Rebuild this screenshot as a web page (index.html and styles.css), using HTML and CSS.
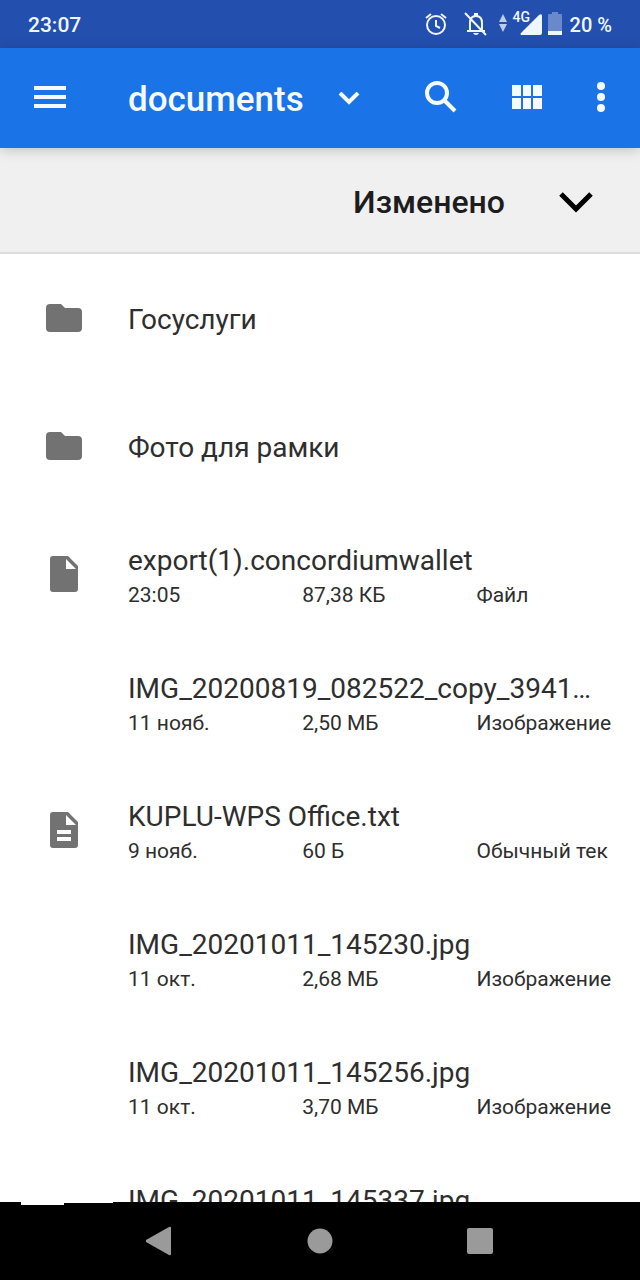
FILE: index.html
```
<!DOCTYPE html>
<html lang="ru">
<head>
<meta charset="utf-8">
<meta name="viewport" content="width=device-width, initial-scale=1">
<title>documents</title>
<link rel="stylesheet" href="styles.css">
</head>
<body>
<svg class="defs" aria-hidden="true">
  <symbol id="folder" viewBox="0 0 36 30"><path d="M4 1h11l4 4h13a4 4 0 0 1 4 4v16a4 4 0 0 1-4 4H4a4 4 0 0 1-4-4V5a4 4 0 0 1 4-4z"/></symbol>
  <symbol id="file" viewBox="0 0 28 36"><path fill-rule="evenodd" d="M3 0h15l10 10v23a3 3 0 0 1-3 3H3a3 3 0 0 1-3-3V3a3 3 0 0 1 3-3zM16 3v10h10z"/></symbol>
  <symbol id="text-file" viewBox="0 0 28 36"><path fill-rule="evenodd" d="M3 0h15l10 10v23a3 3 0 0 1-3 3H3a3 3 0 0 1-3-3V3a3 3 0 0 1 3-3zM16 3v10h10zM7 18v4h14v-4zM7 25v4h14v-4z"/></symbol>
</svg>

<div class="status-bar">
  <time class="clock">23:07</time>
  <div class="status-icons">
    <svg width="22" height="24" viewBox="0 0 22 24" fill="none" stroke="currentColor" stroke-width="2"><circle cx="11" cy="13" r="9"/><path d="M11 8v6l4 2M1 6l5-4M21 6l-5-4"/></svg>
    <svg class="muted-bell" width="24" height="24" viewBox="0 0 24 24"><path fill="none" stroke="currentColor" stroke-width="2" d="M6 18V11q0-7 6-7t6 7v8M3 19h18M1 1l21 22"/><path fill="currentColor" d="M10 1h4v4h-4zM9 21h6q-1 2-3 2t-3-2z"/></svg>
    <svg class="traffic" width="8" height="20" viewBox="0 0 8 20" fill="currentColor"><path d="M0 9l4-8 4 8zM0 11l4 8 4-8z"/></svg>
    <div class="signal">
      <svg width="22" height="21" viewBox="0 0 22 21" fill="currentColor"><path d="M22 2v17q0 2-2 2H1q-1-1 0-2L19 1q3-2 3 1z"/></svg>
      <span class="network">4G</span>
    </div>
    <svg class="battery" width="14" height="24" viewBox="0 0 14 24" fill="currentColor"><path opacity=".35" d="M4 0h6v2h3q1 0 1 1v16H0V3q0-1 1-1h3z"/><path d="M0 19h14v4H0z"/></svg>
    <span class="level">20 %</span>
  </div>
</div>

<header class="app-bar">
  <button class="icon-button" aria-label="Меню"><svg width="32" height="22" viewBox="0 0 32 22" fill="currentColor"><path d="M0 0h32v4H0zM0 9h32v4H0zM0 18h32v4H0z"/></svg></button>
  <button class="location">
    <span>documents</span>
    <svg width="22" height="14" viewBox="0 0 22 14" fill="none" stroke="currentColor" stroke-width="4"><path d="M2 1l9 9 9-9"/></svg>
  </button>
  <div class="actions">
    <button class="icon-button" aria-label="Поиск"><svg width="32" height="32" viewBox="0 0 32 32" fill="none" stroke="currentColor"><circle cx="12" cy="12" r="10" stroke-width="4"/><path stroke-width="4" d="M19 19l11 11"/></svg></button>
    <button class="icon-button" aria-label="Сетка"><svg width="30" height="24" viewBox="0 0 30 24" fill="currentColor"><path d="M0 0h9v11H0zM11 0h8v11h-8zM21 0h9v11h-9zM0 13h9v11H0zM11 13h8v11h-8zM21 13h9v11h-9z"/></svg></button>
    <button class="icon-button" aria-label="Ещё"><svg width="8" height="30" viewBox="0 0 8 30" fill="currentColor"><circle cx="4" cy="4" r="4"/><circle cx="4" cy="15" r="4"/><circle cx="4" cy="26" r="4"/></svg></button>
  </div>
</header>

<div class="sort-bar">
  <button class="sort-button">
    <span>Изменено</span>
    <svg width="34" height="22" viewBox="0 0 34 22" fill="none" stroke="currentColor" stroke-width="5"><path d="M2 3l15 15L32 3"/></svg>
  </button>
</div>

<main class="files">
  <ul class="file-list">
    <li class="row"><div class="thumb"><svg width="36" height="30"><use href="#folder"/></svg></div><div class="info"><p class="name">Госуслуги</p></div></li>
    <li class="row"><div class="thumb"><svg width="36" height="30"><use href="#folder"/></svg></div><div class="info"><p class="name">Фото для рамки</p></div></li>
    <li class="row"><div class="thumb"><svg width="28" height="36"><use href="#file"/></svg></div><div class="info detailed"><p class="name">export(1).concordiumwallet</p><div class="meta"><span>23:05</span><span>87,38 КБ</span><span>Файл</span></div></div></li>
    <li class="row"><div class="thumb"></div><div class="info detailed"><p class="name">IMG_20200819_082522_copy_3941…</p><div class="meta"><span>11 нояб.</span><span>2,50 МБ</span><span>Изображение</span></div></div></li>
    <li class="row"><div class="thumb"><svg width="28" height="36"><use href="#text-file"/></svg></div><div class="info detailed"><p class="name">KUPLU-WPS Office.txt</p><div class="meta"><span>9 нояб.</span><span>60 Б</span><span>Обычный тек</span></div></div></li>
    <li class="row"><div class="thumb"></div><div class="info detailed"><p class="name">IMG_20201011_145230.jpg</p><div class="meta"><span>11 окт.</span><span>2,68 МБ</span><span>Изображение</span></div></div></li>
    <li class="row"><div class="thumb"></div><div class="info detailed"><p class="name">IMG_20201011_145256.jpg</p><div class="meta"><span>11 окт.</span><span>3,70 МБ</span><span>Изображение</span></div></div></li>
    <li class="row"><div class="thumb"></div><div class="info detailed"><p class="name">IMG_20201011_145337.jpg</p><div class="meta"></div></div></li>
  </ul>
</main>

<nav class="system-nav">
  <button class="icon-button" aria-label="Назад"><svg width="28" height="30" viewBox="0 0 28 30" fill="currentColor"><path d="M0 14L23 1q2-1 2 1v26q0 2-2 1L0 16q-1-1 0-2z"/></svg></button>
  <button class="icon-button" aria-label="Домой"><svg width="26" height="26" viewBox="0 0 26 26" fill="currentColor"><circle cx="13" cy="13" r="12.5"/></svg></button>
  <button class="icon-button" aria-label="Недавние"><svg width="28" height="28" viewBox="0 0 28 28" fill="currentColor"><rect x="1" y="1" width="26" height="26" rx="2"/></svg></button>
</nav>
</body>
</html>
```
FILE: styles.css
```
* {
  box-sizing: border-box;
}

body {
  margin: 0;
  height: 100vh;
  display: flex;
  flex-direction: column;
  overflow: hidden;
  background: #fff;
  color: #2e2e2e;
  font-family: Roboto, "Noto Sans", sans-serif;
}

button {
  padding: 0;
  border: 0;
  background: none;
  color: inherit;
  font: inherit;
}

svg {
  display: block;
  flex: none;
}

.defs {
  position: absolute;
  width: 0;
  height: 0;
}

.icon-button {
  display: flex;
  align-items: center;
  justify-content: center;
}

/* Status bar */
.status-bar {
  flex: none;
  height: 48px;
  padding: 2px 28px 0;
  display: flex;
  align-items: center;
  justify-content: space-between;
  background: #234fae;
  color: #f0f6ff;
  font-size: 21px;
  font-weight: 500;
}

.status-icons {
  display: flex;
  align-items: center;
}

.status-icons svg {
  margin-bottom: 2px;
}

.status-icons .muted-bell {
  margin-left: 17px;
}

.status-icons .traffic {
  margin: 0 6px 4px 11px;
  opacity: 0.75;
}

.signal {
  position: relative;
  padding-left: 7px;
}

.network {
  position: absolute;
  left: 0;
  top: -4px;
  font-size: 14px;
  line-height: 14px;
}

.status-icons .battery {
  margin: 0 8px 2px 6px;
}

.level {
  font-size: 20px;
}

/* App bar */
.app-bar {
  position: relative;
  z-index: 1;
  flex: none;
  height: 100px;
  padding: 0 35px 2px 34px;
  display: flex;
  align-items: center;
  background: #1b73e8;
  color: #f4faff;
  box-shadow: 0 2px 12px rgba(0, 0, 0, 0.2);
}

.location {
  margin-left: 62px;
  padding-top: 4px;
  display: flex;
  align-items: center;
  gap: 34px;
  font-size: 35px;
  font-weight: 500;
}

.actions {
  margin-left: auto;
  display: flex;
  align-items: center;
  gap: 55px;
}

/* Sort bar */
.sort-bar {
  flex: none;
  height: 106px;
  padding: 4px 47px 0 0;
  display: flex;
  align-items: center;
  justify-content: flex-end;
  background: #f0f0f0;
  border-bottom: 2px solid #dcdcdc;
  color: #1d1d1d;
}

.sort-button {
  display: flex;
  align-items: center;
  gap: 54px;
  font-size: 32px;
  font-weight: 500;
}

.sort-button svg {
  color: #000;
}

/* File list */
.files {
  flex: 1;
  min-height: 0;
  overflow: hidden;
}

.file-list {
  margin: 0;
  padding: 0;
  list-style: none;
}

.row {
  height: 128px;
  padding-right: 28px;
  display: grid;
  grid-template-columns: 128px minmax(0, 1fr);
  align-items: center;
}

.thumb {
  width: 128px;
  display: flex;
  justify-content: center;
  fill: #727272;
}

.info {
  padding-top: 4px;
}

.info.detailed {
  padding-top: 6px;
}

.name {
  margin: 0;
  font-size: 28px;
  line-height: 36px;
  white-space: nowrap;
  overflow: hidden;
}

.meta {
  display: grid;
  grid-template-columns: 36% 36% 28%;
  font-size: 21px;
  line-height: 32px;
  min-height: 32px;
}

.meta span {
  white-space: nowrap;
  overflow: hidden;
}

/* System navigation */
.system-nav {
  position: relative;
  flex: none;
  height: 78px;
  padding: 0 80px;
  display: grid;
  grid-template-columns: repeat(3, 1fr);
  background: #000;
  color: #9a9a9a;
}

.system-nav::before,
.system-nav::after {
  content: "";
  position: absolute;
  top: 0;
  background: #fff;
}

.system-nav::before {
  left: 21px;
  width: 43px;
  height: 3px;
}

.system-nav::after {
  left: 64px;
  width: 49px;
  height: 1px;
}
```
